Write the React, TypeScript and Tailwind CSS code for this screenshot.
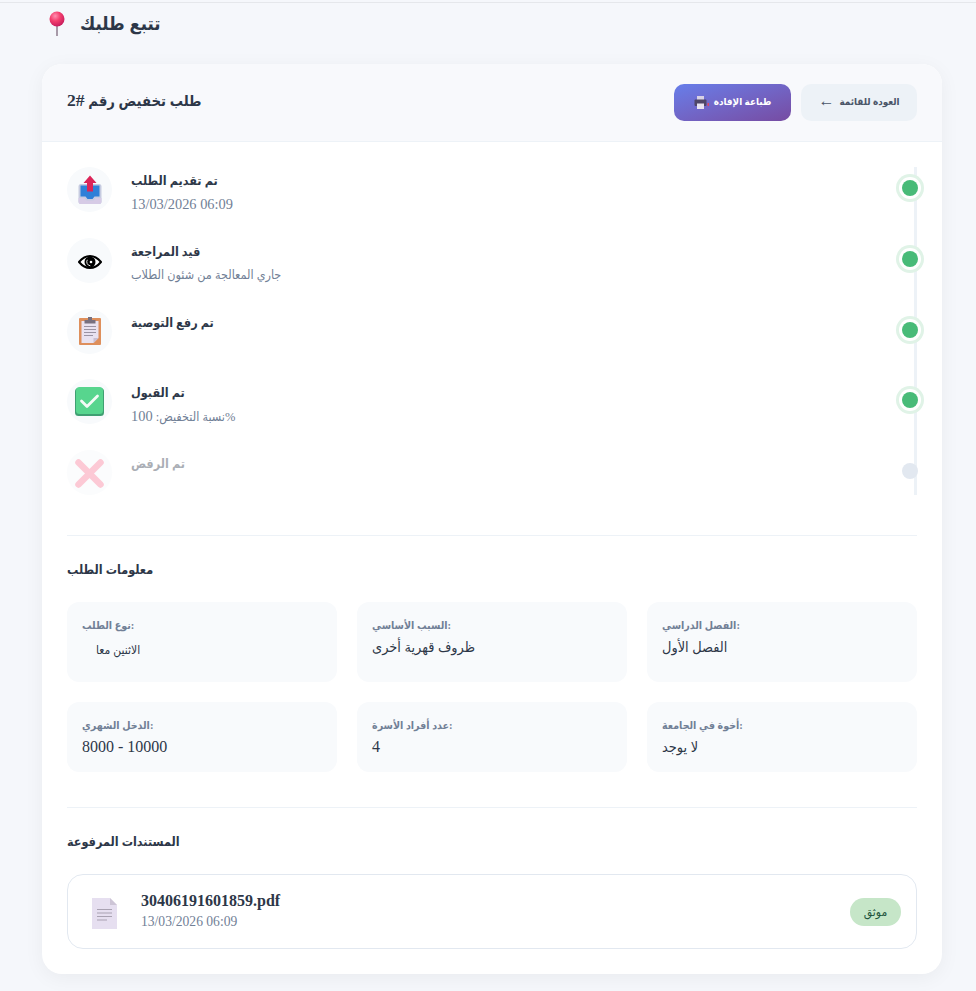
const serif = "font-['Liberation_Serif','DejaVu_Sans_Condensed','DejaVu_Sans',serif]";

const PinIcon = () => (
  <svg width="20" height="26" viewBox="0 0 20 26">
    <defs>
      <radialGradient id="pin" cx="0.38" cy="0.3" r="0.75">
        <stop offset="0" stopColor="#ff8fb0" />
        <stop offset="0.45" stopColor="#f43f6e" />
        <stop offset="1" stopColor="#c2185b" />
      </radialGradient>
    </defs>
    <rect x="9" y="12" width="2" height="13" fill="#a79aa8" />
    <circle cx="10" cy="8" r="7.5" fill="url(#pin)" />
  </svg>
);

const UploadIcon = () => (
  <svg width="24" height="30" viewBox="0 0 24 30">
    <rect x="0.5" y="9" width="23" height="20" rx="2.5" fill="#c6cbe0" />
    <path d="M0.5 23h6l2 2.5h7l2-2.5h6v3.5a2.5 2.5 0 0 1-2.5 2.5H3a2.5 2.5 0 0 1-2.5-2.5z" fill="#d6cbe6" />
    <path d="M2.5 10.5h19v11h-5l-2 2.5h-5l-2-2.5h-5z" fill="#2f80d8" />
    <path d="M12 0.5l6.5 7.5H15v8.5H9V8H5.5z" fill="#dc2458" />
  </svg>
);

const EyeIcon = () => (
  <svg width="24" height="14" viewBox="0 0 24 14" className="mt-[4px]">
    <path d="M1 7C4.5 2.8 8.2 1 12 1s7.500 1.800 11 6c-3.500 4.200-7.200 6-11 6S4.500 11.200 1 7z" fill="#fff" stroke="#000" strokeWidth="2" />
    <circle cx="12" cy="7" r="5.500" fill="#000" />
    <path d="M9.300 4.800a4 4 0 0 0 3 6" fill="none" stroke="#fff" strokeWidth="0.9" />
    <circle cx="13" cy="7" r="1.300" fill="#fff" />
  </svg>
);

const ClipboardIcon = () => (
  <svg width="22" height="28" viewBox="0 0 22 28">
    <rect x="0" y="1" width="22" height="27" rx="1" fill="#de8f5c" />
    <path d="M2.500 4h17v17l-5 5h-12z" fill="#e8e2f0" />
    <path d="M19.500 21l-5 5v-5z" fill="#c9bfd2" />
    <path d="M5.500 3h3.500V0h4v3h3.500v3.500h-11z" fill="#77707f" />
    <path d="M5 9.500h12M5 12.500h12M5 15.500h12M5 18.500h9" stroke="#9a93a3" strokeWidth="1" />
  </svg>
);

const CheckIcon = () => (
  <svg width="29" height="29" viewBox="0 0 29 29">
    <rect x="0" y="1" width="29" height="28" rx="3.500" fill="#3f9f72" />
    <rect x="1" y="0" width="27" height="27" rx="3.500" fill="#57d58e" />
    <path d="M6.500 14l5.500 5.500L22.500 9" fill="none" stroke="#f3fbf6" strokeWidth="2.800" strokeLinecap="round" strokeLinejoin="round" />
  </svg>
);

const CrossIcon = () => (
  <svg width="29" height="29" viewBox="0 0 29 29" className="mt-[2px]">
    <path d="M3.500 3.500l22 22M25.500 3.500l-22 22" stroke="#fb94ac" strokeWidth="6.500" strokeLinecap="round" />
  </svg>
);

const DocIcon = () => (
  <svg width="25" height="31" viewBox="0 0 25 31" className="mt-[4px]">
    <path d="M0 0h18l7 7v24H0z" fill="#e6dff0" />
    <path d="M18 0l7 7h-7z" fill="#cdc5d6" />
    <path d="M5 11.500h15M5 15h15M5 18.500h15M5 22h10" stroke="#a9a2b2" strokeWidth="1" />
  </svg>
);

const PrinterIcon = () => (
  <svg width="15" height="13" viewBox="0 0 15 13">
    <rect x="3" y="0" width="7" height="4" fill="#d8d2e6" />
    <rect x="0.500" y="3.500" width="12" height="6.500" rx="1" fill="#4f4668" />
    <rect x="3" y="7.500" width="7" height="5.500" fill="#e8e2f0" />
    <rect x="13.500" y="7" width="1.500" height="3" fill="#e0455f" />
  </svg>
);

const steps = [
  { title: "تم تقديم الطلب", sub: <span className="text-[14.4px]">13/03/2026 06:09</span>, icon: <UploadIcon />, done: true },
  { title: "قيد المراجعة", sub: "جاري المعالجة من شئون الطلاب", icon: <EyeIcon />, done: true },
  { title: "تم رفع التوصية", icon: <ClipboardIcon />, done: true },
  { title: "تم القبول", sub: <>نسبة التخفيض: <span className="text-[14.4px]">100</span>%</>, icon: <CheckIcon />, done: true },
  { title: "تم الرفض", icon: <CrossIcon />, done: false },
];

const details = [
  { label: "نوع الطلب:", value: "الاثنين معا", size: "text-[12px] pl-[14px] pt-[3px]" },
  { label: "السبب الأساسي:", value: "ظروف قهرية أخرى", size: "text-[14.4px]" },
  { label: "الفصل الدراسي:", value: "الفصل الأول", size: "text-[14.4px]" },
  { label: "الدخل الشهري:", value: "8000 - 10000", size: "text-[16px]" },
  { label: "عدد أفراد الأسرة:", value: "4", size: "text-[16px]" },
  { label: "أخوة في الجامعة:", value: "لا يوجد", size: "text-[14.4px]" },
];

export default function App() {
  return (
    <div className={`min-h-[991px] bg-[#f5f7fb] pt-[2px] ${serif}`}>
      <div className="h-[62px] border-t border-[#e5e7eb] pl-[47px] flex items-start pt-[8px] gap-[13px]">
        <PinIcon />
        <h1 className="text-[18.5px] leading-[26px] tracking-[-0.8px] font-bold text-[#2d3748]">تتبع طلبك</h1>
      </div>

      <div className="ml-[42px] w-[900px] bg-white rounded-[20px] shadow-[0_4px_20px_rgba(0,0,0,0.05)] overflow-hidden">
        <div className="h-[78px] px-[25px] flex items-center justify-between bg-[#f8f9fc] border-b border-[#edf2f7]">
          <h2 className="text-[14.7px] leading-[20px] mb-[4px] font-bold text-[#2d3748]">
            طلب تخفيض رقم <span className="text-[17.6px]">#2</span>
          </h2>
          <div className="flex gap-[10px]">
            <button className="w-[117px] h-[37px] rounded-[10px] bg-gradient-to-br from-[#667eea] to-[#764ba2] text-white text-[9.8px] font-bold flex items-center justify-center gap-[5px]">
              <PrinterIcon />
              طباعة الإفادة
            </button>
            <button className="w-[116px] h-[37px] rounded-[10px] bg-[#edf2f7] text-[#4a5568] text-[9.8px] font-bold flex items-center justify-center gap-[5px]">
              <span className="text-[16px] leading-[16px] font-normal mb-[3px]">←</span>
              العودة للقائمة
            </button>
          </div>
        </div>

        <div className="p-[25px]">
          <div className="relative flex flex-col gap-[25.75px]">
            <div className="absolute right-0 top-0 bottom-0 w-[3px] bg-[#edf2f7]"></div>
            {steps.map((s) => (
              <div key={s.title} className="relative flex h-[45px] gap-[19px]">
                <div className={`w-[45px] h-[45px] rounded-full bg-[#f8fafc] flex items-center justify-center shrink-0 ${s.done ? "" : "opacity-50"}`}>
                  {s.icon}
                </div>
                <div className={`pt-[4px] ${s.done ? "" : "opacity-40"}`}>
                  <div className="text-[12.5px] leading-[20px] font-bold text-[#2d3748]">{s.title}</div>
                  {s.sub && <div className="mt-[3px] text-[12.5px] leading-[20px] text-[#718096]">{s.sub}</div>}
                </div>
                <div
                  className={`absolute right-[-1px] top-[13px] w-4 h-4 rounded-full ${
                    s.done ? "bg-[#48bb78] shadow-[0_0_0_3px_#fff,0_0_0_6px_#e0f3e7]" : "bg-[#e2e8f0]"
                  }`}
                ></div>
              </div>
            ))}
          </div>

          <div className="mt-[40px] pt-[25px] border-t border-[#edf2f7]">
            <h3 className="text-[12.5px] leading-[18px] font-bold text-[#2d3748] mb-[23px]">معلومات الطلب</h3>
            <div className="grid grid-cols-3 grid-rows-[80px_70px] gap-[20px]">
              {details.map((d) => (
                <div key={d.label} className="bg-[#f8fafc] rounded-[12px] px-[15px] pt-[16px]">
                  <div className="text-[10.6px] leading-[16px] font-bold text-[#718096] mb-[1px]">{d.label}</div>
                  <div className={`leading-[24px] text-[#2d3748] ${d.size}`}>{d.value}</div>
                </div>
              ))}
            </div>
          </div>

          <div className="mt-[35px] pt-[25px] border-t border-[#edf2f7]">
            <h3 className="text-[12.5px] leading-[18px] font-bold text-[#2d3748] mb-[23px]">المستندات المرفوعة</h3>
            <div className="h-[75px] border border-[#e2e8f0] rounded-[16px] pl-[24px] pr-[15px] flex items-center justify-between">
              <div className="flex items-center gap-[24px]">
                <DocIcon />
                <div>
                  <div className="text-[16px] leading-[20px] font-bold text-[#2d3748]">30406191601859.pdf</div>
                  <div className="mt-[1px] text-[13.6px] leading-[20px] text-[#718096]">13/03/2026 06:09</div>
                </div>
              </div>
              <span className="w-[51px] h-[28px] rounded-full bg-[#c6e6c8] text-[#22543d] text-[12px] flex items-center justify-center">موثق</span>
            </div>
          </div>
        </div>
      </div>
    </div>
  );
}
